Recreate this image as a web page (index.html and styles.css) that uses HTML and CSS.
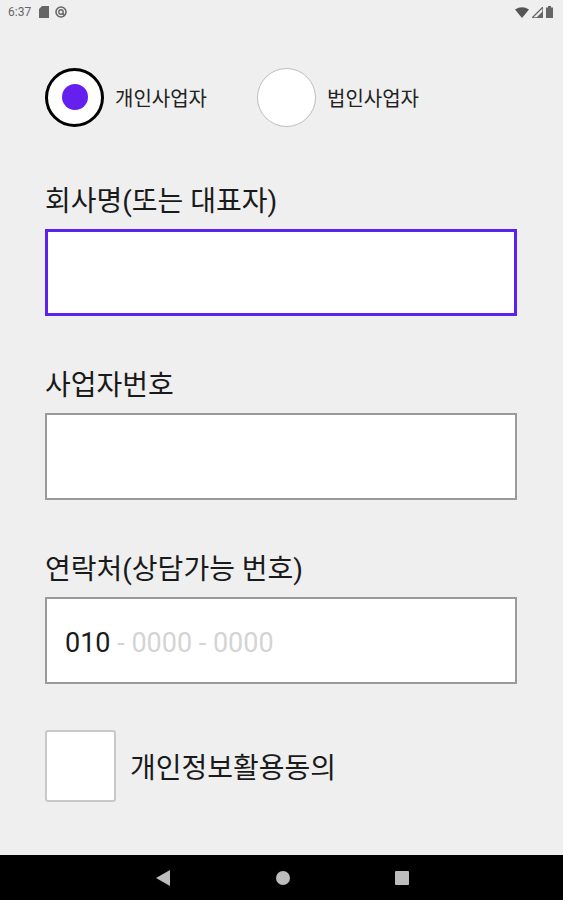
FILE: index.html
```html
<!DOCTYPE html>
<html lang="ko">
<head>
<meta charset="utf-8">
<link rel="stylesheet" href="styles.css">
</head>
<body>
<div class="status">
  <div class="status-left">
    <span class="time">6:37</span>
    <svg class="sicon" width="10" height="12" viewBox="0 0 10 12"><path d="M3 0H10V12H0V3Z" fill="#666"/></svg>
    <svg class="sicon" width="12" height="12" viewBox="0 0 12 12"><circle cx="6" cy="6" r="5" fill="none" stroke="#666" stroke-width="1.6"/><circle cx="6" cy="6" r="2.2" fill="none" stroke="#666" stroke-width="1.4"/><path d="M7 7L9.5 9.5" stroke="#666" stroke-width="1.6"/></svg>
  </div>
  <div class="status-right">
    <svg width="14" height="11" viewBox="0 0 14 11"><path d="M0 2.5Q7 -2 14 2.5L7 11Z" fill="#555"/></svg>
    <svg width="11" height="11" viewBox="0 0 11 11"><path d="M11 0V11H0Z" fill="none" stroke="#666" stroke-width="1.3"/><path d="M11 4V11H4Z" fill="#666"/></svg>
    <svg width="7" height="12" viewBox="0 0 7 12"><path d="M2 0H5V1.5H7V12H0V1.5H2Z" fill="#666"/></svg>
  </div>
</div>

<main class="form">
  <div class="radio-row">
    <div class="radio-item">
      <span class="radio checked"><span class="dot"></span></span>
      <span class="radio-label">개인사업자</span>
    </div>
    <div class="radio-item">
      <span class="radio"></span>
      <span class="radio-label">법인사업자</span>
    </div>
  </div>

  <div class="field first">
    <div class="label">회사명(또는 대표자)</div>
    <div class="input focused"></div>
  </div>

  <div class="field">
    <div class="label">사업자번호</div>
    <div class="input"></div>
  </div>

  <div class="field">
    <div class="label">연락처(상담가능 번호)</div>
    <div class="input phone"><span class="typed">010</span><span class="hint"> - 0000 - 0000</span></div>
  </div>

  <div class="check-row">
    <span class="checkbox"></span>
    <span class="check-label">개인정보활용동의</span>
  </div>
</main>

<nav class="navbar">
  <svg width="16" height="18" viewBox="0 0 16 18"><path d="M15 1V17L1 9Z" fill="#bdbdbd"/></svg>
  <svg width="16" height="16" viewBox="0 0 16 16"><circle cx="8" cy="8" r="7" fill="#bdbdbd"/></svg>
  <svg width="14" height="14" viewBox="0 0 14 14"><rect x="0" y="0" width="14" height="14" rx="1" fill="#bdbdbd"/></svg>
</nav>
</body>
</html>
```

FILE: styles.css
```css
* { box-sizing: border-box; }
html, body { margin: 0; padding: 0; }
body {
  width: 563px;
  height: 900px;
  background: #efefef;
  font-family: Roboto, "Noto Sans CJK KR", sans-serif;
  color: #1a1a1a;
  display: flex;
  flex-direction: column;
  overflow: hidden;
}
.status {
  height: 24px;
  display: flex;
  justify-content: space-between;
  align-items: center;
  padding: 0 10px 0 8px;
  color: #666;
}
.status-left, .status-right { display: flex; align-items: center; gap: 6px; }
.status-right { gap: 3px; }
.time { font-size: 12px; margin-right: 2px; }
.sicon { display: block; }

.form {
  flex: 1;
  padding: 43px 46px 0 45px;
}
.radio-row {
  display: flex;
  gap: 50px;
  height: 60px;
}
.radio-item {
  display: flex;
  align-items: center;
  gap: 11px;
}
.radio {
  width: 59px;
  height: 59px;
  border-radius: 50%;
  background: #fff;
  border: 1px solid #bdbdbd;
  display: flex;
  align-items: center;
  justify-content: center;
}
.radio.checked { border: 3px solid #000; }
.dot {
  width: 26px;
  height: 26px;
  border-radius: 50%;
  background: #651fef;
}
.radio-label { font-size: 20px; color: #222; }

.field { margin-top: 52px; }
.field.first { margin-top: 57px; }
.label {
  font-size: 28px;
  line-height: 36px;
  height: 36px;
  margin-bottom: 9px;
  color: #1a1a1a;
}
.input {
  height: 87px;
  background: #fff;
  border: 2px solid #9a9a9a;
}
.input.focused { border: 3px solid #5b21f0; }
.input.phone {
  display: flex;
  align-items: center;
  padding: 5px 0 0 18px;
  font-size: 27px;
}
.typed { color: #1a1a1a; }
.hint { color: #d4d4d4; white-space: pre; }

.check-row {
  margin-top: 46px;
  display: flex;
  align-items: center;
  gap: 14px;
}
.checkbox {
  width: 71px;
  height: 72px;
  background: #fff;
  border: 2px solid #c8c8c8;
  border-radius: 3px;
}
.check-label { font-size: 28px; color: #1a1a1a; }

.navbar {
  height: 45px;
  background: #000;
  display: flex;
  align-items: center;
  justify-content: center;
  gap: 104px;
}
.navbar svg { display: block; }
```
